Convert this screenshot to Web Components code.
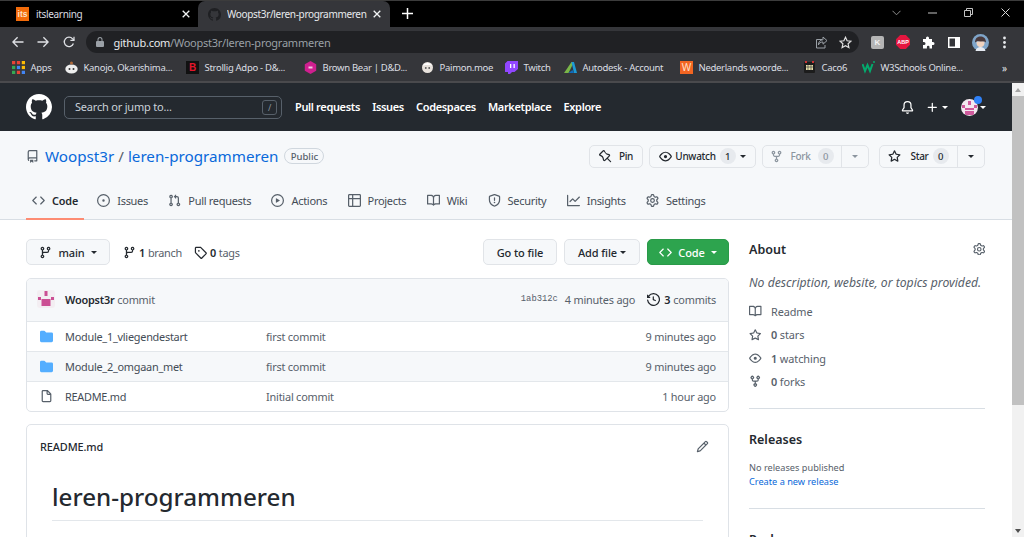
<!DOCTYPE html>
<html><head><meta charset="utf-8"><title>GitHub</title>
<style>
html,body{margin:0;padding:0;height:537px;overflow:hidden;background:#fff}
body{font-family:"Noto Sans","Open Sans",sans-serif;display:flex;flex-direction:column;width:1024px}
</style></head><body>
<browser-chrome></browser-chrome>
<page-view>
  <gh-header></gh-header>
  <repo-head></repo-head>
  <repo-body></repo-body>
</page-view>
<script>
const P={
github:'M8 0C3.58 0 0 3.58 0 8c0 3.54 2.29 6.53 5.47 7.59.4.07.55-.17.55-.38 0-.19-.01-.82-.01-1.49-2.01.37-2.53-.49-2.69-.94-.09-.23-.48-.94-.82-1.13-.28-.15-.68-.52-.01-.53.63-.01 1.08.58 1.23.82.72 1.21 1.87.87 2.33.66.07-.52.28-.87.51-1.07-1.78-.2-3.64-.89-3.64-3.95 0-.87.31-1.59.82-2.15-.08-.2-.36-1.02.08-2.12 0 0 .67-.21 2.2.82.64-.18 1.32-.27 2-.27.68 0 1.36.09 2 .27 1.53-1.04 2.2-.82 2.2-.82.44 1.1.16 1.92.08 2.12.51.56.82 1.27.82 2.15 0 3.07-1.87 3.75-3.65 3.95.29.25.54.73.54 1.48 0 1.07-.01 1.93-.01 2.2 0 .21.15.46.55.38A8.013 8.013 0 0016 8c0-4.42-3.58-8-8-8z',
repo:'M2 2.5A2.5 2.5 0 014.5 0h8.75a.75.75 0 01.75.75v12.5a.75.75 0 01-.75.75h-2.5a.75.75 0 110-1.5h1.75v-2h-8a1 1 0 00-.714 1.7.75.75 0 01-1.072 1.05A2.495 2.495 0 012 11.5v-9zm10.5-1V9h-8c-.356 0-.694.074-1 .208V2.5a1 1 0 011-1h8zM5 12.25v3.25a.25.25 0 00.4.2l1.45-1.087a.25.25 0 01.3 0L8.6 15.7a.25.25 0 00.4-.2v-3.25a.25.25 0 00-.25-.25h-3.5a.25.25 0 00-.25.25z',
code:'M4.72 3.22a.75.75 0 011.06 1.06L2.06 8l3.72 3.72a.75.75 0 11-1.06 1.06L.47 8.53a.75.75 0 010-1.06l4.25-4.25zm6.56 0a.75.75 0 10-1.06 1.06L13.94 8l-3.72 3.72a.75.75 0 101.06 1.06l4.25-4.25a.75.75 0 000-1.06l-4.25-4.25z',
issue:'M8 9.5a1.5 1.5 0 100-3 1.5 1.5 0 000 3zM8 0a8 8 0 100 16A8 8 0 008 0zM1.5 8a6.5 6.5 0 1113 0 6.5 6.5 0 01-13 0z',
pr:'M7.177 3.073L9.573.677A.25.25 0 0110 .854v4.792a.25.25 0 01-.427.177L7.177 3.427a.25.25 0 010-.354zM3.75 2.5a.75.75 0 100 1.5.75.75 0 000-1.5zm-2.25.75a2.25 2.25 0 113 2.122v5.256a2.251 2.251 0 11-1.5 0V5.372A2.25 2.25 0 011.5 3.25zM11 2.5h-1V4h1a1 1 0 011 1v5.628a2.251 2.251 0 101.5 0V5A2.5 2.5 0 0011 2.5zm1 10.25a.75.75 0 111.5 0 .75.75 0 01-1.5 0zM3.75 12a.75.75 0 100 1.5.75.75 0 000-1.5z',
play:'M1.5 8a6.5 6.5 0 1113 0 6.5 6.5 0 01-13 0zM8 0a8 8 0 100 16A8 8 0 008 0zM6.379 5.227A.25.25 0 006 5.442v5.117a.25.25 0 00.379.214l4.264-2.559a.25.25 0 000-.428L6.379 5.227z',
table:'M0 1.75C0 .784.784 0 1.75 0h12.5C15.216 0 16 .784 16 1.75v12.5A1.75 1.75 0 0114.25 16H1.75A1.75 1.75 0 010 14.25V1.75zM1.5 6.5v7.75c0 .138.112.25.25.25H5v-8H1.5zM5 5H1.5V1.75a.25.25 0 01.25-.25H5V5zm1.5 1.5v8h7.75a.25.25 0 00.25-.25V6.5h-8zm8-1.5h-8V1.5h7.75a.25.25 0 01.25.25V5z',
book:'M0 1.75A.75.75 0 01.75 1h4.253c1.227 0 2.317.59 3 1.501A3.744 3.744 0 0111.006 1h4.245a.75.75 0 01.75.75v10.5a.75.75 0 01-.75.75h-4.507a2.25 2.25 0 00-1.591.659l-.622.621a.75.75 0 01-1.06 0l-.622-.621A2.25 2.25 0 005.258 13H.75a.75.75 0 01-.75-.75V1.75zm8.755 3a2.25 2.25 0 012.25-2.25H14.5v9h-3.757c-.71 0-1.4.201-1.992.572l.004-7.322zm-1.504 7.324l.004-5.073-.002-2.253A2.25 2.25 0 005.003 2.5H1.5v9h3.757a3.75 3.75 0 011.994.574z',
shield:'M7.467.133a1.75 1.75 0 011.066 0l5.25 1.68A1.75 1.75 0 0115 3.48V7c0 1.566-.32 3.182-1.303 4.682-.983 1.498-2.585 2.813-5.032 3.855a1.7 1.7 0 01-1.33 0c-2.447-1.042-4.049-2.357-5.032-3.855C1.32 10.182 1 8.566 1 7V3.48a1.75 1.75 0 011.217-1.667l5.25-1.68zm.61 1.429a.25.25 0 00-.153 0l-5.25 1.68a.25.25 0 00-.174.238V7c0 1.358.275 2.666 1.057 3.86.784 1.194 2.121 2.34 4.366 3.297a.2.2 0 00.154 0c2.245-.956 3.582-2.104 4.366-3.298C13.225 9.666 13.5 8.36 13.5 7V3.48a.25.25 0 00-.174-.237l-5.25-1.68zM9 10.5a1 1 0 11-2 0 1 1 0 012 0zm-.25-5.75a.75.75 0 10-1.5 0v3a.75.75 0 001.5 0v-3z',
graph:'M1.5 1.75a.75.75 0 00-1.5 0v12.5c0 .414.336.75.75.75h14.5a.75.75 0 000-1.5H1.5V1.75zm14.28 2.53a.75.75 0 00-1.06-1.06L10 7.94 7.53 5.47a.75.75 0 00-1.06 0L3.22 8.72a.75.75 0 001.06 1.06L7 7.06l2.47 2.47a.75.75 0 001.06 0l5.25-5.25z',
gear:'M7.429 1.525a6.593 6.593 0 011.142 0c.036.003.108.036.137.146l.289 1.105c.147.56.55.967.997 1.189.174.086.341.183.501.29.417.278.97.423 1.53.27l1.102-.303c.11-.03.175.016.195.046.219.31.41.641.573.989.014.031.022.11-.059.19l-.815.806c-.411.406-.562.957-.53 1.456a4.588 4.588 0 010 .582c-.032.499.119 1.05.53 1.456l.815.806c.08.08.073.159.059.19a6.494 6.494 0 01-.573.99c-.02.029-.086.074-.195.045l-1.103-.303c-.559-.153-1.112-.008-1.529.27-.16.107-.327.204-.5.29-.449.222-.851.628-.998 1.189l-.289 1.105c-.029.11-.101.143-.137.146a6.613 6.613 0 01-1.142 0c-.036-.003-.108-.037-.137-.146l-.289-1.105c-.147-.56-.55-.967-.997-1.189a4.502 4.502 0 01-.501-.29c-.417-.278-.97-.423-1.53-.27l-1.102.303c-.11.03-.175-.016-.195-.046a6.492 6.492 0 01-.573-.989c-.014-.031-.022-.11.059-.19l.815-.806c.411-.406.562-.957.53-1.456a4.587 4.587 0 010-.582c.032-.499-.119-1.05-.53-1.456l-.815-.806c-.08-.08-.073-.159-.059-.19a6.44 6.44 0 01.573-.99c.02-.029.086-.075.195-.045l1.103.303c.559.153 1.112.008 1.529-.27.16-.107.327-.204.5-.29.449-.222.851-.628.998-1.189l.289-1.105c.029-.11.101-.143.137-.146zM8 0c-.236 0-.47.01-.701.03-.743.065-1.29.615-1.458 1.261l-.29 1.106c-.017.066-.078.158-.211.224a5.994 5.994 0 00-.668.386c-.123.082-.233.09-.3.071L3.27 2.776c-.644-.177-1.392.02-1.82.63a7.977 7.977 0 00-.704 1.217c-.315.675-.111 1.422.363 1.891l.815.806c.05.048.098.147.088.294a6.084 6.084 0 000 .772c.01.147-.038.246-.088.294l-.815.806c-.474.469-.678 1.216-.363 1.891.2.428.436.835.704 1.218.428.609 1.176.806 1.82.63l1.103-.303c.066-.019.176-.011.299.071.213.143.436.272.668.386.133.066.194.158.212.224l.289 1.106c.169.646.715 1.196 1.458 1.26a8.094 8.094 0 001.402 0c.743-.064 1.29-.614 1.458-1.26l.29-1.106c.017-.066.078-.158.211-.224a5.98 5.98 0 00.668-.386c.123-.082.233-.09.3-.071l1.102.302c.644.177 1.392-.02 1.82-.63.268-.382.505-.789.704-1.217.315-.675.111-1.422-.364-1.891l-.814-.806c-.05-.048-.098-.147-.088-.294a6.1 6.1 0 000-.772c-.01-.147.039-.246.088-.294l.814-.806c.475-.469.679-1.216.364-1.891a7.992 7.992 0 00-.704-1.218c-.428-.609-1.176-.806-1.82-.63l-1.103.303c-.066.019-.176.011-.299-.071a5.991 5.991 0 00-.668-.386c-.133-.066-.194-.158-.212-.224L10.16 1.29C9.99.645 9.444.095 8.701.031A8.094 8.094 0 008 0zm1.5 8a1.5 1.5 0 11-3 0 1.5 1.5 0 013 0zM11 8a3 3 0 11-6 0 3 3 0 016 0z',
eye:'M1.679 7.932c.412-.621 1.242-1.75 2.366-2.717C5.175 4.242 6.527 3.5 8 3.5c1.473 0 2.824.742 3.955 1.715 1.124.967 1.954 2.096 2.366 2.717a.119.119 0 010 .136c-.412.621-1.242 1.75-2.366 2.717C10.825 11.758 9.473 12.5 8 12.5c-1.473 0-2.824-.742-3.955-1.715C2.92 9.818 2.09 8.69 1.679 8.068a.119.119 0 010-.136zM8 2c-1.981 0-3.67.992-4.933 2.078C1.797 5.169.88 6.423.43 7.1a1.619 1.619 0 000 1.798c.45.678 1.367 1.932 2.637 3.024C4.329 13.008 6.019 14 8 14c1.981 0 3.67-.992 4.933-2.078 1.27-1.091 2.187-2.345 2.637-3.023a1.619 1.619 0 000-1.798c-.45-.678-1.367-1.932-2.637-3.023C11.671 2.992 9.981 2 8 2zm0 8a2 2 0 100-4 2 2 0 000 4z',
star:'M8 .25a.75.75 0 01.673.418l1.882 3.815 4.21.612a.75.75 0 01.416 1.279l-3.046 2.97.719 4.192a.75.75 0 01-1.088.791L8 12.347l-3.766 1.98a.75.75 0 01-1.088-.79l.72-4.194L.818 6.374a.75.75 0 01.416-1.28l4.21-.611L7.327.668A.75.75 0 018 .25zm0 2.445L6.615 5.5a.75.75 0 01-.564.41l-3.097.45 2.24 2.184a.75.75 0 01.216.664l-.528 3.084 2.769-1.456a.75.75 0 01.698 0l2.77 1.456-.53-3.084a.75.75 0 01.216-.664l2.24-2.183-3.096-.45a.75.75 0 01-.564-.41L8 2.694v.001z',
fork:'M5 3.25a.75.75 0 11-1.5 0 .75.75 0 011.5 0zm0 2.122a2.25 2.25 0 10-1.5 0v.878A2.25 2.25 0 005.75 8.5h1.5v2.128a2.251 2.251 0 101.5 0V8.5h1.5a2.25 2.25 0 002.25-2.25v-.878a2.25 2.25 0 10-1.5 0v.878a.75.75 0 01-.75.75h-4.5A.75.75 0 015 6.25v-.878zm3.75 7.378a.75.75 0 11-1.5 0 .75.75 0 011.5 0zm3-8.75a.75.75 0 100-1.5.75.75 0 000 1.5z',
branch:'M11.75 2.5a.75.75 0 100 1.5.75.75 0 000-1.5zm-2.25.75a2.25 2.25 0 113 2.122V6A2.5 2.5 0 0110 8.5H6a1 1 0 00-1 1v1.128a2.251 2.251 0 11-1.5 0V5.372a2.25 2.25 0 111.5 0v1.836A2.492 2.492 0 016 7h4a1 1 0 001-1v-.628A2.25 2.25 0 019.5 3.25zM4.25 12a.75.75 0 100 1.5.75.75 0 000-1.5zM3.5 3.25a.75.75 0 111.5 0 .75.75 0 01-1.5 0z',
tag:'M2.5 7.775V2.75a.25.25 0 01.25-.25h5.025a.25.25 0 01.177.073l6.25 6.25a.25.25 0 010 .354l-5.025 5.025a.25.25 0 01-.354 0l-6.25-6.25a.25.25 0 01-.073-.177zm-1.5 0V2.75C1 1.784 1.784 1 2.75 1h5.025c.464 0 .91.184 1.238.513l6.25 6.25a1.75 1.75 0 010 2.474l-5.026 5.026a1.75 1.75 0 01-2.474 0l-6.25-6.25A1.75 1.75 0 011 7.775zM6 5a1 1 0 100 2 1 1 0 000-2z',
history:'M1.643 3.143L.427 1.927A.25.25 0 000 2.104V5.75c0 .138.112.25.25.25h3.646a.25.25 0 00.177-.427L2.715 4.215a6.5 6.5 0 11-1.18 4.458.75.75 0 10-1.493.154 8.001 8.001 0 101.6-5.684zM7.75 4a.75.75 0 01.75.75v2.992l2.028.812a.75.75 0 01-.557 1.392l-2.5-1A.75.75 0 017 8.25v-3.5A.75.75 0 017.75 4z',
folder:'M1.75 1A1.75 1.75 0 000 2.75v10.5C0 14.216.784 15 1.75 15h12.5A1.75 1.75 0 0016 13.25v-8.5A1.75 1.75 0 0014.25 3H7.5a.25.25 0 01-.2-.1l-.9-1.2C6.07 1.26 5.55 1 5 1H1.75z',
file:'M3.75 1.5a.25.25 0 00-.25.25v11.5c0 .138.112.25.25.25h8.5a.25.25 0 00.25-.25V6H9.75A1.75 1.75 0 018 4.25V1.5H3.75zm5.75.56v2.19c0 .138.112.25.25.25h2.19L9.5 2.06zM2 1.75C2 .784 2.784 0 3.75 0h5.086c.464 0 .909.184 1.237.513l3.414 3.414c.329.328.513.773.513 1.237v8.086A1.75 1.75 0 0112.25 15h-8.5A1.75 1.75 0 012 13.25V1.75z',
pencil:'M11.013 1.427a1.75 1.75 0 012.474 0l1.086 1.086a1.75 1.75 0 010 2.474l-8.61 8.61c-.21.21-.47.364-.756.445l-3.251.93a.75.75 0 01-.927-.928l.929-3.25a1.75 1.75 0 01.445-.758l8.61-8.61zm1.414 1.06a.25.25 0 00-.354 0L10.811 3.75l1.439 1.44 1.263-1.263a.25.25 0 000-.354l-1.086-1.086zM11.189 6.25L9.75 4.81l-6.286 6.287a.25.25 0 00-.064.108l-.558 1.953 1.953-.558a.249.249 0 00.108-.064l6.286-6.286z',
bell:'M8 16a2 2 0 001.985-1.75c.017-.137-.097-.25-.235-.25h-3.5c-.138 0-.252.113-.235.25A2 2 0 008 16zM8 1.5A3.5 3.5 0 004.5 5v2.947c0 .346-.102.683-.294.97l-1.703 2.556a.018.018 0 00-.003.01l.001.006c0 .002.002.004.004.006a.017.017 0 00.006.004l.007.001h10.964l.007-.001a.018.018 0 00.006-.004.016.016 0 00.004-.006l.001-.007a.017.017 0 00-.003-.01l-1.703-2.554a1.75 1.75 0 01-.294-.97V5A3.5 3.5 0 008 1.5zM3 5a5 5 0 0110 0v2.947c0 .05.015.098.042.139l1.703 2.555A1.518 1.518 0 0113.482 13H2.518a1.518 1.518 0 01-1.263-2.36l1.703-2.554A.25.25 0 003 7.947V5z',
plus:'M7.75 2a.75.75 0 01.75.75V7h4.25a.75.75 0 110 1.5H8.5v4.25a.75.75 0 11-1.5 0V8.5H2.75a.75.75 0 010-1.5H7V2.75A.75.75 0 017.75 2z',
pin:'M4.456.734a1.75 1.75 0 012.826.504l.613 1.327a3.081 3.081 0 002.084 1.707l2.454.584c1.332.317 1.8 1.972.832 2.94L11.06 10l3.72 3.72a.75.75 0 11-1.061 1.06L10 11.06l-2.204 2.205c-.968.968-2.623.5-2.94-.832l-.584-2.454a3.081 3.081 0 00-1.707-2.084l-1.327-.613a1.75 1.75 0 01-.504-2.826L4.456.734zM5.92 1.866a.25.25 0 00-.404-.072L1.794 5.516a.25.25 0 00.072.404l1.328.613A4.582 4.582 0 015.73 9.63l.584 2.454a.25.25 0 00.42.12l5.47-5.47a.25.25 0 00-.12-.42L10.63 6.23a4.581 4.581 0 01-3.098-2.537L5.92 1.866z'
};
function def(name,css,html){
  customElements.define(name,class extends HTMLElement{
    constructor(){super();this.attachShadow({mode:'open'});}
    connectedCallback(){
      const h=typeof html==='function'?html(this):html;
      this.shadowRoot.innerHTML='<style>'+css+'</style>'+h;
    }
  });
}
def('gh-icon',':host{display:inline-flex;flex:none;line-height:0}svg{display:block}',
  e=>{const s=e.getAttribute('size')||13;const c=e.getAttribute('color')||'currentColor';
  return `<svg width="${s}" height="${s}" viewBox="0 0 16 16" fill="${c}" fill-rule="evenodd"><path d="${P[e.getAttribute('name')]}"/></svg>`});
def('gh-caret',':host{display:inline-block;flex:none;width:0;height:0;border:3.5px solid transparent;border-top-color:currentColor;border-bottom:0}','');

/* ---------- browser chrome ---------- */
def('browser-chrome',':host{display:block;flex:none}',`<tab-strip></tab-strip><nav-toolbar></nav-toolbar><bookmark-bar></bookmark-bar>`);
def('browser-tab',`:host{display:flex;align-items:center;flex:none;height:26px;box-sizing:border-box;color:#dadce0;font-size:10px;letter-spacing:-.33px;position:relative}
 :host([active]){background:#35363a;border-radius:7px 7px 0 0;color:#e8eaed}
 .t{flex:1;min-width:0;white-space:nowrap;overflow:hidden}
 svg.x{flex:none}`,
 e=>`<slot name="icon"></slot><span class="t"><slot></slot></span><svg class="x" width="8" height="8" viewBox="0 0 8 8" stroke="#f1f3f4" stroke-width="1.3"><path d="M.7.7l6.6 6.6M7.3.7L.7 7.3"/></svg>`);
def('its-fav',`:host{display:flex;flex:none;width:13px;height:14px;background:#f26b0a;color:#fde2c8;font:700 8.5px "Liberation Sans",sans-serif;letter-spacing:0;align-items:center;justify-content:center;margin-right:7px}`,'its');
def('tab-strip',`:host{display:flex;align-items:flex-end;height:27px;background:#000;box-sizing:border-box;border-top:1px solid #3c3c3c;color:#ddd}
 .plus{margin-left:12px;margin-bottom:8px;flex:none}
 .ctl{margin-left:auto;display:flex;align-items:center;align-self:flex-start;margin-top:7px;padding-right:14px}
 .ctl svg{display:block;flex:none}`,
 `<browser-tab style="width:198px;padding:0 8px 0 16px"><its-fav slot="icon"></its-fav>itslearning</browser-tab>
  <browser-tab active style="width:192px;padding:0 9px 0 10px"><gh-icon slot="icon" name="github" size="13" color="#1f2023" style="margin-right:6px"></gh-icon>Woopst3r/leren-programmeren</browser-tab>
  <svg class="plus" width="11" height="11" viewBox="0 0 11 11" stroke="#fff" stroke-width="1.5"><path d="M5.5 0v11M0 5.5h11"/></svg>
  <div class="ctl">
   <svg width="9" height="6" viewBox="0 0 9 6" fill="none" stroke="#8d8d8d"><path d="M.5.8l4 4 4-4"/></svg>
   <svg style="margin-left:27px" width="9" height="6" viewBox="0 0 9 6" fill="none" stroke="#c4c4c4"><path d="M0 3h9"/></svg>
   <svg style="margin-left:27px" width="9" height="9" viewBox="0 0 9 9" fill="none" stroke="#c4c4c4"><path d="M.5 2.5h6v6h-6zM2.5 2.5V.5h6v6H6.5"/></svg>
   <svg style="margin-left:28px" width="9" height="9" viewBox="0 0 9 9" fill="none" stroke="#d8d8d8"><path d="M.5.5l8 8M8.5.5l-8 8"/></svg>
  </div>`);
def('nav-toolbar',`:host{display:flex;align-items:center;height:26px;background:#35363a;flex:none;box-sizing:border-box;padding-top:4px}
 svg{display:block;flex:none}
 .pill{display:flex;align-items:center;width:773px;height:22px;margin-left:11px;border-radius:11px;background:#202124;font-size:11px;letter-spacing:-.25px;color:#9aa0a6;box-sizing:border-box;padding:0 7px 0 10px;white-space:nowrap}
 .pill b{font-weight:400;color:#e8eaed}
 .addr{margin-left:9.5px;flex:1}
 .k{width:13px;height:13px;border-radius:2px;background:#b5b5b5;color:#f2f2f2;font:700 8px "Liberation Sans",sans-serif;display:flex;align-items:center;justify-content:center;margin-left:12px;flex:none}
 .abp{width:14px;height:14px;margin-left:12px;background:#e5163f;color:#fff;font:700 5.5px "Liberation Sans",sans-serif;display:flex;align-items:center;justify-content:center;flex:none;clip-path:polygon(30% 0,70% 0,100% 30%,100% 70%,70% 100%,30% 100%,0 70%,0 30%)}`,
 `<svg style="margin-left:12px" width="12" height="12" viewBox="0 0 12 12" fill="none" stroke="#dfe1e5" stroke-width="1.3"><path d="M11.5 6H1M5.6 1.2L.9 6l4.7 4.8"/></svg>
  <svg style="margin-left:13px" width="12" height="12" viewBox="0 0 12 12" fill="none" stroke="#dfe1e5" stroke-width="1.3"><path d="M.5 6H11M6.4 1.2L11.1 6l-4.7 4.8"/></svg>
  <svg style="margin-left:14px" width="12" height="12" viewBox="0 0 12 12" fill="none" stroke="#dfe1e5" stroke-width="1.3"><path d="M10.4 7.5A4.7 4.7 0 1 1 9.6 2.8L11 4.2"/><path d="M11 .8v3.6H7.4" stroke-width="1.2"/></svg>
  <div class="pill">
   <svg width="8" height="10" viewBox="0 0 8 10" fill="#9aa0a6"><path d="M1.5 4V2.6a2.5 2.5 0 0 1 5 0V4h.5a1 1 0 0 1 1 1v4a1 1 0 0 1-1 1H1a1 1 0 0 1-1-1V5a1 1 0 0 1 1-1zm1 0h3V2.6a1.5 1.5 0 0 0-3 0z"/></svg>
   <span class="addr"><b>github.com</b>/Woopst3r/leren-programmeren</span>
   <svg width="13" height="13" viewBox="0 0 13 13" fill="none" stroke="#9aa0a6" stroke-width="1"><path d="M7 3.5H1.500v8.500h8.500V9M8 1l4 3.600-4 3.600V6C5.500 6 4.200 7 3.400 9c0-3 1.700-5 4.600-5.300z"/></svg>
   <svg style="margin-left:11px" width="13" height="13" viewBox="0 0 13 13" fill="none" stroke="#e0e0e0" stroke-width="1.2"><path d="M6.500 1.300l1.600 3.500 3.800.4-2.800 2.600.8 3.800-3.400-1.900-3.400 1.900.8-3.800L1.100 5.200l3.800-.4z"/></svg>
  </div>
  <div class="k">K</div>
  <div class="abp">ABP</div>
  <svg style="margin-left:12px" width="13" height="13" viewBox="0 0 13 13" fill="#fff"><path d="M1 3h3V2a1.500 1.500 0 0 1 3 0v1h3v3h1a1.500 1.500 0 0 1 0 3h-1v3.500H7.500V11a1.300 1.300 0 0 0-2.600 0v1.500H1V9h1a1.500 1.500 0 0 0 0-3H1z"/></svg>
  <svg style="margin-left:13px" width="12" height="11" viewBox="0 0 12 11"><path fill="#fff" d="M0 0h12v11H0z"/><path fill="#35363a" d="M1.500 1.500h5.500v8H1.500z"/></svg>
  <svg style="margin-left:12px" width="17" height="17" viewBox="0 0 17 17"><circle cx="8.500" cy="8.500" r="8.500" fill="#7fa5c9"/><path d="M3 8.500C3 4 6 2.500 8.500 2.500S14 4 14 8.500l-1.500-1-4 .5-3-1z" fill="#4a3a3c"/><path d="M4.500 8c1-.6 7-.6 8 0 .3 3-1.500 5-4 5S4.200 11 4.500 8z" fill="#f0d3bf"/><path d="M3.500 17c.5-3 3-4 5-4s4.500 1 5 4z" fill="#e6ebf2"/></svg>
  <svg style="margin-left:14px" width="3" height="13" viewBox="0 0 3 13" fill="#e8eaed"><circle cx="1.500" cy="2" r="1.400"/><circle cx="1.500" cy="6.500" r="1.400"/><circle cx="1.500" cy="11" r="1.400"/></svg>`);
def('book-mark',`:host{display:flex;align-items:center;flex:none;font-size:9.5px;letter-spacing:-.3px;color:#dcdfe3;white-space:nowrap;height:100%}
 ::slotted(*){flex:none}
 .t{margin-left:5.5px}`,`<slot name="i"></slot><span class="t"><slot></slot></span>`);
def('bookmark-bar',`:host{display:flex;align-items:center;height:30px;background:#35363a;box-sizing:border-box;border-bottom:2px solid #4a4a4d;padding:1px 0 0 12px}
 svg,.fi{display:block;flex:none;width:13px;height:13px}
 .fi{font:700 10px "Liberation Sans",sans-serif;text-align:center;line-height:13px;letter-spacing:0}`,
 `<book-mark style="width:53px"><svg slot="i" viewBox="0 0 12 12"><rect x="0" y="0" width="3" height="3" fill="#ea4335"/><rect x="4.500" y="0" width="3" height="3" fill="#ea4335"/><rect x="9" y="0" width="3" height="3" fill="#fbbc04"/><rect x="0" y="4.500" width="3" height="3" fill="#34a853"/><rect x="4.500" y="4.500" width="3" height="3" fill="#4285f4"/><rect x="9" y="4.500" width="3" height="3" fill="#fbbc04"/><rect x="0" y="9" width="3" height="3" fill="#34a853"/><rect x="4.500" y="9" width="3" height="3" fill="#ea4335"/><rect x="9" y="9" width="3" height="3" fill="#4285f4"/></svg>Apps</book-mark>
 <book-mark style="width:121px"><svg slot="i" viewBox="0 0 13 13"><ellipse cx="6.500" cy="8" rx="6.200" ry="4.500" fill="#eee"/><circle cx="6.500" cy="2" r="1.500" fill="#b06a3a"/><circle cx="4.500" cy="8" r="1" fill="#333"/><circle cx="8.500" cy="8" r="1" fill="#333"/></svg>Kanojo, Okarishima...</book-mark>
 <book-mark style="width:118px"><div slot="i" class="fi" style="background:#111;color:#e3162b">B</div>Strollig Adpo - D&amp;...</book-mark>
 <book-mark style="width:117px"><svg slot="i" viewBox="0 0 13 13"><path d="M6.500 0l5.700 3.200v6.600L6.500 13 .8 9.800V3.200z" fill="#cf1f8f"/><rect x="4.500" y="5.500" width="4" height="2" fill="#f5c6e2"/></svg>Brown Bear | D&amp;D...</book-mark>
 <book-mark style="width:84px"><svg slot="i" viewBox="0 0 13 13"><circle cx="6.500" cy="6.500" r="5.500" fill="#e8e2dc"/><path d="M2 5c1-4 8-4 9 0l-2-1-5 0z" fill="#fff"/><circle cx="4.800" cy="7" r=".9" fill="#555"/><circle cx="8.200" cy="7" r=".9" fill="#555"/></svg>Paimon.moe</book-mark>
 <book-mark style="width:59px"><svg slot="i" viewBox="0 0 13 13"><path d="M2.500 0H13v8l-3.500 3H7l-2 2H3v-2H0V2.500z" fill="#9146ff"/><path d="M5 3h1.300v4H5zM8.500 3h1.300v4H8.500z" fill="#fff"/></svg>Twitch</book-mark>
 <book-mark style="width:116px"><svg slot="i" viewBox="0 0 13 13"><path d="M0 12L7.500 1H10L4.500 12z" fill="#7ab648"/><path d="M7.500 1H10l3 11h-3z" fill="#1c9ad6"/><path d="M4.500 12l4-3 1.500 3z" fill="#0f6cbd"/></svg>Autodesk - Account</book-mark>
 <book-mark style="width:123px"><div slot="i" class="fi" style="background:#f26522;color:#ffe0cc;font-weight:400">W</div>Nederlands woorde...</book-mark>
 <book-mark style="width:59px"><svg slot="i" viewBox="0 0 13 13"><rect x="1" y="1" width="11" height="11" rx="1" fill="#1c1c1c"/><rect x="3" y="4" width="7" height="5" fill="#e8e0a8"/><path d="M3 6h7M5 4v5M8 4v5" stroke="#444" stroke-width=".7"/><rect x="2" y="0" width="2" height="2" fill="#c33"/><rect x="9" y="0" width="2" height="2" fill="#c33"/></svg>Caco6</book-mark>
 <book-mark style="width:130px"><svg slot="i" viewBox="0 0 13 13" fill="none" stroke="#04aa6d" stroke-width="2"><path d="M.5 3l2.500 7 2.500-6 2.500 6 2.500-7"/><path d="M11 1h2" stroke-width="1.500"/></svg>W3Schools Online...</book-mark>
 <span style="margin-left:10px;color:#e3e5e8;font-size:10px">»</span>`);

/* ---------- page ---------- */
def('page-scrollbar',`:host{display:flex;flex-direction:column;width:12px;flex:none;background:#f1f1f1}
 .a{height:13px;flex:none;display:flex;align-items:center;justify-content:center}
 .a i{width:0;height:0;border:3px solid transparent}
 .u i{border-bottom:4px solid #a3a3a3;border-top:0}
 .d i{border-top:4px solid #505050;border-bottom:0}
 .th{height:309px;background:#c1c1c1;flex:none}
 .sp{flex:1}`,`<div class="a u"><i></i></div><div class="th"></div><div class="sp"></div><div class="a d"><i></i></div>`);
def('page-view',`:host{display:flex;flex:1;min-height:0;overflow:hidden}
 .m{flex:1;min-width:0;overflow:hidden}`,`<div class="m"><slot></slot></div><page-scrollbar></page-scrollbar>`);
def('gh-header',`:host{display:flex;align-items:center;height:48px;background:#24292f;padding-left:26px;color:#fff;box-sizing:border-box;font-size:11px}
 .s{width:218px;height:23px;margin-left:12px;border:1px solid #57606a;border-radius:5px;box-sizing:border-box;display:flex;align-items:center;padding:0 4px 0 10px;color:#c9d1d9;flex:none;font-size:11px;letter-spacing:-.2px}
 .s span{flex:1;padding-bottom:2px}
 .s i{font-style:normal;width:15px;height:15px;border:1px solid #57606a;border-radius:3px;display:flex;align-items:center;justify-content:center;font-size:9px;color:#8b949e;box-sizing:border-box}
 nav{display:flex;margin-left:13px;font-weight:600;gap:12.2px;white-space:nowrap;letter-spacing:-.35px;padding-bottom:2px}
 .r{margin-left:auto;display:flex;align-items:center;padding-right:26px}
 .av{position:relative;width:17px;height:17px;margin-left:13px}
 .av svg{display:block;border-radius:50%}
 .dot{position:absolute;right:-4px;top:-3px;width:8px;height:8px;border-radius:50%;background:#2f81f7}`,
 `<gh-icon name="github" size="26" color="#fff"></gh-icon>
 <div class="s"><span>Search or jump to...</span><i>/</i></div>
 <nav><span>Pull requests</span><span>Issues</span><span>Codespaces</span><span>Marketplace</span><span>Explore</span></nav>
 <div class="r"><gh-icon name="bell" size="13"></gh-icon>
 <gh-icon name="plus" size="13" style="margin-left:12px"></gh-icon><gh-caret style="margin-left:3px"></gh-caret>
 <div class="av"><svg width="17" height="17" viewBox="0 0 17 17"><rect width="17" height="17" fill="#f3e8ef"/><path d="M1 6h3v3H1zM13 6h3v3h-3zM7 2h3v4H7zM4 9h9v2H4zM4 12h9v4H4z" fill="#cf5a9c"/></svg><div class="dot"></div></div><gh-caret style="margin-left:2px"></gh-caret></div>`);
def('gh-btn',`:host{display:inline-flex;align-items:stretch;flex:none;height:23px;box-sizing:border-box;border:1px solid #e1e4e8;border-radius:5px;background:#f6f8fa;color:#24292f;font-size:10.5px;font-weight:500;white-space:nowrap;letter-spacing:-.1px}
 .a{display:flex;align-items:center;flex:1;padding:0 6px;gap:var(--g,5px);justify-content:center}
 .a gh-icon{margin-right:var(--ig,0)}
 .b{display:flex;align-items:center;justify-content:center;width:26px;border-left:1px solid #e1e4e8;flex:none}
 :host([dim]){color:#8c959f}
 .n{display:inline-flex;align-items:center;justify-content:center;width:16px;height:16px;border-radius:50%;background:#e7eaee;font-size:9.5px}`,
 e=>{const i=e.getAttribute('icon'),n=e.getAttribute('count'),sp=e.hasAttribute('split'),ca=e.hasAttribute('caret');
 return `<div class="a">${i?`<gh-icon name="${i}" size="13"></gh-icon>`:''}<slot></slot>${n?`<span class="n">${n}</span>`:''}${ca?'<gh-caret></gh-caret>':''}</div>${sp?'<div class="b"><gh-caret></gh-caret></div>':''}`});
def('nav-tab',`:host{display:flex;align-items:center;flex:none;height:100%;box-sizing:border-box;padding:0 6px;gap:7px;font-size:11px;letter-spacing:-.3px;color:#444c56;margin-right:8.3px;position:relative;white-space:nowrap}
 :host([sel]){font-weight:600;color:#24292f}
 :host([sel])::after{content:"";position:absolute;left:0;right:0;bottom:-1px;height:2px;background:#fd8c73}
 gh-icon{color:#57606a}`,e=>`<gh-icon name="${e.getAttribute('icon')}" size="13"></gh-icon><slot></slot>`);
def('repo-head',`:host{display:block;background:#f6f8fa;height:89px;box-sizing:border-box;border-bottom:1px solid #d8dee4}
 .t{display:flex;align-items:center;height:51px;padding:0 27px 1px 26px;box-sizing:border-box}
 a{color:#0969da;text-decoration:none;font-size:15.2px}
 .sl{color:#57606a;font-size:15.2px;margin:0 4px}
 .pub{font-size:9.5px;font-weight:500;border:1px solid #d0d7de;border-radius:9px;color:#57606a;height:16px;width:40px;box-sizing:border-box;display:flex;align-items:center;justify-content:center;margin-left:6px}
 .act{margin-left:auto;display:flex;gap:6px}
 .act gh-btn{font-size:10px;letter-spacing:-.3px}
 nav{display:flex;height:37px;padding-left:26px}`,
 `<div class="t"><gh-icon name="repo" size="13" color="#57606a" style="margin-right:6px"></gh-icon><a>Woopst3r</a><span class="sl">/</span><a>leren-programmeren</a><span class="pub">Public</span>
 <div class="act"><gh-btn icon="pin" style="width:54px;--g:7px">Pin</gh-btn><gh-btn icon="eye" count="1" caret style="width:107px;--g:4px;--ig:-1px">Unwatch</gh-btn><gh-btn icon="fork" count="0" split dim style="width:107px;--g:7px">Fork</gh-btn><gh-btn icon="star" count="0" split style="width:106px;margin-left:4px;--g:4px;--ig:5px">Star</gh-btn></div></div>
 <nav><nav-tab icon="code" sel style="font-size:10.8px;letter-spacing:-.1px;margin-right:7px">Code</nav-tab><nav-tab icon="issue">Issues</nav-tab><nav-tab icon="pr">Pull requests</nav-tab><nav-tab icon="play">Actions</nav-tab><nav-tab icon="table">Projects</nav-tab><nav-tab icon="book">Wiki</nav-tab><nav-tab icon="shield">Security</nav-tab><nav-tab icon="graph">Insights</nav-tab><nav-tab icon="gear">Settings</nav-tab></nav>`);
def('file-row',`:host{display:grid;grid-template-columns:226px 1fr auto;align-items:center;height:30px;box-sizing:border-box;border-top:1px solid #e3e7eb;padding:0 12px 0 13px;font-size:10.9px;letter-spacing:-.2px;color:#57606a;white-space:nowrap}
 :host([alt]){background:#f6f8fa}
 .n{display:flex;align-items:center;gap:12px;color:#444c56;letter-spacing:-.25px}`,
 e=>{const f=e.getAttribute('kind')==='dir';return `<div class="n"><gh-icon name="${f?'folder':'file'}" size="13" color="${f?'#54aeff':'#57606a'}"></gh-icon><slot name="name"></slot></div><div><slot name="msg"></slot></div><div><slot name="time"></slot></div>`});
def('file-box',`:host{display:block;border:1px solid #dfe3e8;border-radius:5px;overflow:hidden;background:#fff}
 .h{display:flex;align-items:center;height:42px;background:#f6f8fa;padding:0 12px 2px 10px;box-sizing:border-box;font-size:10.9px;letter-spacing:-.2px;color:#57606a;white-space:nowrap}
 .h b{font-weight:600;color:#24292f}
 .av{width:18px;height:18px;margin-right:10px;display:block;border-radius:3px}
 .sha{font:8.8px "Liberation Mono",monospace;letter-spacing:0;color:#57606a;margin-left:auto}
 .ago{margin-left:7px}
 .cm{margin-left:12px;display:flex;align-items:center;gap:3px}
 .cm b{color:#24292f}`,
 `<div class="h"><svg class="av" viewBox="0 0 18 18"><rect width="18" height="18" fill="#f3eef2"/><path d="M7.500 1h3v5h-3zM1 7h3v3H1zM14 7h3v3h-3zM4.500 9h9v7h-9z" fill="#cb4f94"/></svg><span><b>Woopst3r</b> commit</span><span class="sha">1ab312c</span><span class="ago">4 minutes ago</span><span class="cm"><gh-icon name="history" size="13" color="#24292f" style="margin-right:1px"></gh-icon><b>3</b> commits</span></div>
 <slot></slot>`);
def('about-row',`:host{display:flex;align-items:center;font-size:10.9px;letter-spacing:-.1px;color:#57606a;gap:9.5px;height:23.3px}
 gh-icon{color:#57606a}`,e=>`<gh-icon name="${e.getAttribute('icon')}" size="12.5"></gh-icon><span><slot></slot></span>`);
def('repo-body',`:host{display:grid;grid-template-columns:703px 236px;column-gap:20px;padding:19px 0 0 26px;color:#24292f}
 .bar{display:flex;align-items:center;height:26px;margin-bottom:13px}
 .br{height:26px;width:84px;font-size:11px}
 .mini{display:flex;align-items:center;font-size:10.9px;letter-spacing:-.3px;color:#57606a;gap:3px;white-space:nowrap}
 .mini b{color:#24292f;font-weight:600}
 .go{margin-left:auto;display:flex;gap:7px}
 .go gh-btn{height:26px;font-size:11px}
 .green{background:#2da44e;border-color:#2a9a49;color:#fff}
 .readme{margin-top:12px;border:1px solid #dfe3e8;border-radius:5px 5px 0 0;height:200px;box-sizing:border-box;padding:0 25px}
 .rh{display:flex;align-items:center;justify-content:space-between;height:42px;margin:0 -6px 0 -12px;font-size:10.9px;font-weight:500;letter-spacing:-.1px;color:#24292f}
 h1{margin:13px 0 0;font-size:24.2px;font-weight:500;line-height:34px;padding-bottom:6px;border-bottom:1px solid #e3e7eb;color:#24292f}
 aside{padding-top:0}
 aside h2{margin:0;font-size:12.5px;font-weight:600;display:flex;justify-content:space-between;align-items:center;height:20px}
 .desc{font-style:italic;font-size:12.2px;color:#57606a;margin:14px 0 8px;line-height:18px;white-space:nowrap;padding-top:1px}
 hr{border:0;border-top:1px solid #d8dee4;margin:0}
 .sm{font-size:9.2px;color:#57606a;line-height:14px}
 .link{color:#0969da}`,
 `<div>
   <div class="bar"><gh-btn icon="branch" class="br" caret style="--g:6px">main</gh-btn>
     <span class="mini" style="margin-left:13px"><gh-icon name="branch" size="13" color="#24292f"></gh-icon><b>1</b> branch</span>
     <span class="mini" style="margin-left:12px"><gh-icon name="tag" size="13" color="#24292f"></gh-icon><b>0</b> tags</span>
     <div class="go"><gh-btn style="width:74px">Go to file</gh-btn><gh-btn caret style="width:76px;--g:3px">Add file</gh-btn><gh-btn class="green" icon="code" caret style="width:82px;--g:6px">Code</gh-btn></div></div>
   <file-box>
     <file-row kind="dir"><span slot="name">Module_1_vliegendestart</span><span slot="msg">first commit</span><span slot="time">9 minutes ago</span></file-row>
     <file-row kind="dir" alt><span slot="name">Module_2_omgaan_met</span><span slot="msg">first commit</span><span slot="time">9 minutes ago</span></file-row>
     <file-row kind="file"><span slot="name">README.md</span><span slot="msg">Initial commit</span><span slot="time">1 hour ago</span></file-row>
   </file-box>
   <div class="readme"><div class="rh"><span>README.md</span><gh-icon name="pencil" size="13" color="#57606a"></gh-icon></div><h1>leren-programmeren</h1></div>
 </div>
 <aside>
   <h2><span>About</span><gh-icon name="gear" size="12.5" color="#57606a"></gh-icon></h2>
   <div class="desc">No description, website, or topics provided.</div>
   <about-row icon="book">Readme</about-row>
   <about-row icon="star"><b style="font-weight:600">0</b> stars</about-row>
   <about-row icon="eye"><b style="font-weight:600">1</b> watching</about-row>
   <about-row icon="fork"><b style="font-weight:600">0</b> forks</about-row>
   <hr style="margin-top:15px">
   <h2 style="margin-top:20px">Releases</h2>
   <div class="sm" style="margin-top:12px">No releases published</div>
   <div class="sm link">Create a new release</div>
   <hr style="margin-top:19px">
   <h2 style="margin-top:20px">Packages</h2>
 </aside>`);
</script>
</body></html>
